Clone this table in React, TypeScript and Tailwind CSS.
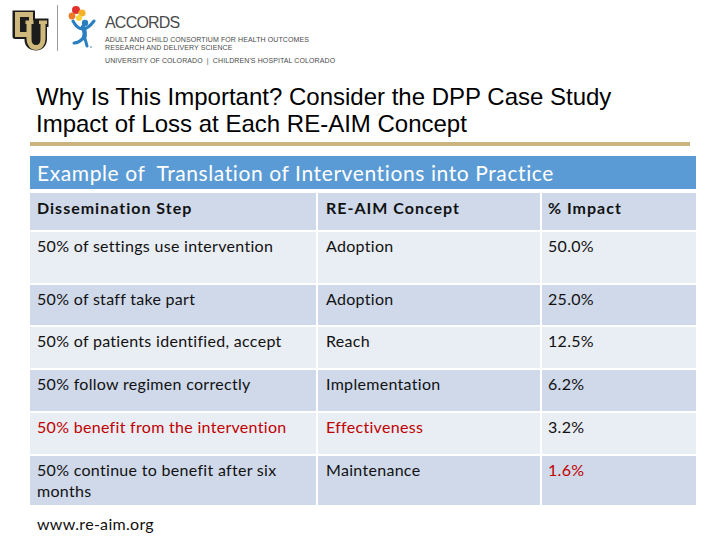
import React from 'react';

type Row = {
  step: string;
  concept: string;
  impact: string;
  h: string;
  tone: 'light' | 'dark';
  redStep?: boolean;
  redImpact?: boolean;
};

const rows: Row[] = [
  { step: '50% of settings use intervention', concept: 'Adoption', impact: '50.0%', h: 'h-[51px]', tone: 'light' },
  { step: '50% of staff take part', concept: 'Adoption', impact: '25.0%', h: 'h-[40px]', tone: 'dark' },
  { step: '50% of patients identified, accept', concept: 'Reach', impact: '12.5%', h: 'h-[41px]', tone: 'light' },
  { step: '50% follow regimen correctly', concept: 'Implementation', impact: '6.2%', h: 'h-[41px]', tone: 'dark' },
  { step: '50% benefit from the intervention', concept: 'Effectiveness', impact: '3.2%', h: 'h-[41px]', tone: 'light', redStep: true },
  { step: '50% continue to benefit after six months', concept: 'Maintenance', impact: '1.6%', h: 'h-[49px]', tone: 'dark', redImpact: true },
];

function CuLogo() {
  return (
    <svg width="37" height="41" viewBox="0 0 37 41">
      {/* black outline */}
      <path
        d="M0.5 0.5 H23 V8.5 H36.5 V17 H35 V29 C35 36 30 40.5 24 40.5 C18 40.5 12.5 36.5 12.5 30 V29 H3 C1.5 29 0.5 28 0.5 26.5 Z"
        fill="#1c1c1c"
      />
      {/* gold C */}
      <path d="M20.5 4.5 H5.5 V24.5 H15" stroke="#cfb87c" strokeWidth="5" fill="none" />
      <rect x="17" y="2" width="4" height="9" fill="#cfb87c" />
      {/* gold U */}
      <path d="M17 12 V29 C17 34 20 37.5 24 37.5 C28 37.5 31 34 31 29 V12" stroke="#cfb87c" strokeWidth="5" fill="none" />
      <rect x="13.5" y="10.5" width="8" height="3.5" fill="#cfb87c" />
      <rect x="27" y="10.5" width="8" height="3.5" fill="#cfb87c" />
    </svg>
  );
}

function KidLogo() {
  return (
    <svg width="30" height="44" viewBox="0 0 30 44">
      <circle cx="10" cy="5" r="4" fill="#e0312f" />
      <circle cx="16" cy="8" r="3.6" fill="#f6b12a" />
      <circle cx="6" cy="11" r="3.4" fill="#ee7a25" />
      <circle cx="13" cy="13" r="3" fill="#f8d23a" />
      {/* head */}
      <circle cx="19" cy="18" r="3.2" fill="#2a7fc1" />
      {/* arms */}
      <path d="M7 16 C10 22 13 24 17 24 C21 24 25 20 28 16" stroke="#2a7fc1" strokeWidth="3" fill="none" strokeLinecap="round" />
      {/* body */}
      <path d="M17 22 C19 26 19 30 18 33" stroke="#2a7fc1" strokeWidth="4.5" fill="none" strokeLinecap="round" />
      {/* legs */}
      <path d="M18 32 C15 36 11 38 8 38" stroke="#2a7fc1" strokeWidth="3" fill="none" strokeLinecap="round" />
      <path d="M18 32 C20 35 20 38 21 41" stroke="#2a7fc1" strokeWidth="3" fill="none" strokeLinecap="round" />
      <circle cx="25" cy="42" r="0.8" fill="#2a7fc1" />
    </svg>
  );
}

export default function App() {
  const calibri = { fontFamily: 'Lato, "Open Sans", sans-serif' };
  return (
    <div className="w-[720px] h-[540px] bg-white overflow-hidden relative" style={{ fontFamily: '"Liberation Sans", Arial, sans-serif' }}>
      {/* Header logos */}
      <div className="flex items-start pl-[12px] pt-[5px] h-[70px]">
        <div className="mt-[5px]">
          <CuLogo />
        </div>
        <div className="w-px h-[46px] bg-[#9a9a9a] ml-[8px]" />
        <div className="ml-[8px]">
          <KidLogo />
        </div>
        <div className="ml-[9px] text-[#4a4a4a]">
          <div className="text-[16px] leading-[20px] mt-[8px] tracking-[-0.8px]">ACCORDS</div>
          <div className="text-[7px] leading-[8px] mt-[3px] tracking-[0.1px]">ADULT AND CHILD CONSORTIUM FOR HEALTH OUTCOMES</div>
          <div className="text-[7px] leading-[8px] tracking-[0.1px]">RESEARCH AND DELIVERY SCIENCE</div>
          <div className="text-[7px] leading-[8px] mt-[5px] tracking-[0.1px]">UNIVERSITY OF COLORADO &nbsp;|&nbsp; CHILDREN'S HOSPITAL COLORADO</div>
        </div>
      </div>

      {/* Title */}
      <div className="pl-[36px] pt-[13px] text-[24px] leading-[27px] text-black">
        <div>Why Is This Important? Consider the DPP Case Study</div>
        <div>Impact of Loss at Each RE-AIM Concept</div>
      </div>
      <div className="ml-[30px] w-[660px] h-[4px] bg-[#c9b47e] mt-[5px]" />

      {/* Table */}
      <div className="ml-[30px] w-[666px] mt-[10px]" style={calibri}>
        <div className="h-[33px] bg-[#5b9bd5] text-white text-[21px] leading-[33px] pl-[7px] tracking-[0.6px]">
          Example of &nbsp;Translation of Interventions into Practice
        </div>
        <div className="grid grid-cols-[286px_222px_154px] gap-[2px] mt-[4px] text-[16px] leading-[21px] text-[#111] tracking-[0.3px]">
          <div className="h-[37px] bg-[#cfd9ea] px-[7px] pt-[4px] font-bold tracking-[1px]">Dissemination Step</div>
          <div className="h-[37px] bg-[#cfd9ea] px-[8px] pt-[4px] font-bold tracking-[1px]">RE-AIM Concept</div>
          <div className="h-[37px] bg-[#cfd9ea] px-[6px] pt-[4px] font-bold tracking-[1px]">% Impact</div>
          {rows.map((r) => {
            const bg = r.tone === 'light' ? 'bg-[#e9edf4]' : 'bg-[#cfd9ea]';
            return (
              <React.Fragment key={r.step}>
                <div className={`${r.h} ${bg} px-[7px] pt-[3px] ${r.redStep ? 'text-[#c00000]' : ''}`}>{r.step}</div>
                <div className={`${r.h} ${bg} px-[8px] pt-[3px] ${r.redStep ? 'text-[#c00000]' : ''}`}>{r.concept}</div>
                <div className={`${r.h} ${bg} px-[6px] pt-[3px] ${r.redImpact ? 'text-[#c00000]' : ''}`}>{r.impact}</div>
              </React.Fragment>
            );
          })}
        </div>
        <div className="pl-[7px] mt-[9px] text-[16px] leading-[20px] text-[#111] tracking-[0.3px]">www.re-aim.org</div>
      </div>
    </div>
  );
}
